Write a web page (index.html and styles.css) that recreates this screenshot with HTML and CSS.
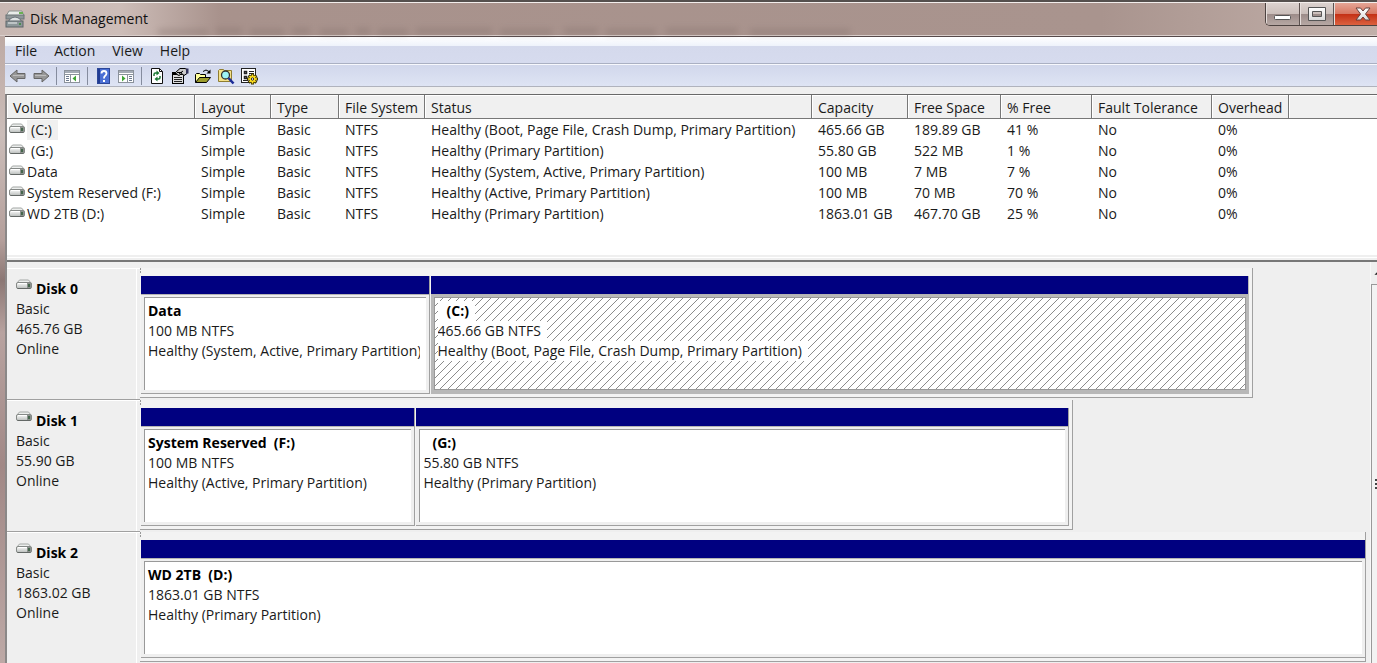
FILE: index.html
```html
<!DOCTYPE html>
<html lang="en">
<head>
<meta charset="utf-8">
<title>Disk Management</title>
<link rel="stylesheet" href="styles.css">
</head>
<body>
<svg class="defs" aria-hidden="true">
  <defs>
    <linearGradient id="metal" x1="0" y1="0" x2="0" y2="1"><stop offset="0" stop-color="#fdfdfd"/><stop offset="1" stop-color="#b9bdbb"/></linearGradient>
    <linearGradient id="glyph" x1="0" y1="0" x2="0" y2="1"><stop offset="0" stop-color="#ffffff"/><stop offset="1" stop-color="#d9d9d9"/></linearGradient>
    <symbol id="drive" viewBox="0 0 16 11">
      <path d="M3.500 1h9l3 3.500h-15z" fill="#eceeed" stroke="#a3a7a5" stroke-width="1"/>
      <rect x=".5" y="3.500" width="15" height="6" rx="1.500" fill="url(#metal)" stroke="#858987"/>
      <path d="M1.500 9.500h13" stroke="#636866"/>
      <path d="M2 4.500h10" stroke="#fff"/>
      <rect x="11" y="4" width="4" height="5" fill="#8c918e"/>
      <rect x="12" y="5" width="2" height="3" fill="#45664c"/>
    </symbol>
  </defs>
</svg>
<div class="window">
  <header class="titlebar">
    <svg class="ghost" viewBox="0 0 720 14" aria-hidden="true">
      <path d="M8 11h50M66 10h26M100 11h34M142 10h18M170 11h28M206 10h14M228 11h30M266 10h76M350 11h52M414 10h34M456 11h50M516 10h72M600 11h100"/>
    </svg>
    <svg class="app-icon" viewBox="0 0 20 18" aria-hidden="true">
      <path d="M4 1h13l2 5H1z" fill="#e9ecea" stroke="#8a918e"/>
      <rect x="14" y="2" width="4" height="2" fill="#69b052"/>
      <rect x="1" y="5" width="18" height="4" fill="#8f9799" stroke="#6c7577"/>
      <path d="M4 10q6-6 12 0v2H4z" fill="#dfe3e4" stroke="#69737a"/>
      <rect x="1" y="11" width="17" height="6" fill="#8d979a" stroke="#5c6568"/>
      <path d="M3 13h9" stroke="#eef1f2"/>
      <rect x="14" y="13" width="2" height="2" fill="#4c8c50"/>
    </svg>
    <h1 class="title">Disk Management</h1>
    <div class="controls">
      <button class="control minimize" type="button" aria-label="Minimize"><svg width="18" height="6" viewBox="0 0 18 6"><rect x=".5" y=".5" width="16" height="4" rx="1" fill="#fff" stroke="#555"/></svg></button>
      <button class="control maximize" type="button" aria-label="Maximize"><svg width="18" height="14" viewBox="0 0 18 14"><path d="M.5.5h17v13H.5zM4.500 4.500v5h9v-5z" fill="url(#glyph)" fill-rule="evenodd" stroke="#555"/></svg></button>
      <button class="control close" type="button" aria-label="Close"><svg width="16" height="14" viewBox="0 0 16 14"><path d="M1 1h4.500L8 4l2.500-3H15l-4.500 6 4.500 6h-4.500L8 10l-2.500 3H1l4.500-6z" fill="url(#glyph)" stroke="#66403c"/></svg></button>
    </div>
  </header>
  <div class="client">
    <nav class="menubar" aria-label="Menu">
      <button type="button">File</button>
      <button type="button">Action</button>
      <button type="button">View</button>
      <button type="button">Help</button>
    </nav>
    <div class="toolbar" role="toolbar" aria-label="Tools">
      <button type="button" aria-label="Back"><svg viewBox="0 0 18 18"><path d="M1 9l7-6v3.500h8v5H8V15z" fill="#979797" stroke="#666"/><path d="M4 8.500h11" stroke="#bdbdbd"/></svg></button>
      <button type="button" aria-label="Forward"><svg viewBox="0 0 18 18"><path d="M17 9l-7-6v3.500H2v5h8V15z" fill="#979797" stroke="#666"/><path d="M3 8.500h11" stroke="#bdbdbd"/></svg></button>
      <span class="divider"></span>
      <button type="button" aria-label="Show console tree"><svg viewBox="0 0 18 18"><rect x="1.500" y="3.500" width="15" height="12" fill="#fff" stroke="#8b929b"/><path d="M2 5h14" stroke="#a4abb5" stroke-width="2"/><path d="M2 7.500h14M7.500 8v8" stroke="#8b929b"/><path d="M3 9.500h3M3 11.500h3M3 13.500h3" stroke="#6e7c90"/><path d="M13 8.500v6L9.500 11.500z" fill="#3fa535"/></svg></button>
      <span class="divider"></span>
      <button type="button" aria-label="Help topics"><svg viewBox="0 0 18 18"><rect x="3.500" y="1.500" width="12" height="15" fill="#4a6fd4" stroke="#2c4798"/><path d="M5 2v14" stroke="#213c94" stroke-width="2"/><path d="M7.500 6.500q0-2.500 2.500-2.500T12.500 6.500q0 1.200-1.300 2.200T10 11.500" fill="none" stroke="#fff" stroke-width="1.800"/><rect x="9" y="13" width="2" height="2" fill="#fff"/></svg></button>
      <button type="button" aria-label="Show action pane"><svg viewBox="0 0 18 18"><rect x="1.500" y="3.500" width="15" height="12" fill="#fff" stroke="#8b929b"/><path d="M2 5h14" stroke="#a4abb5" stroke-width="2"/><path d="M2 7.500h14M10.500 8v8" stroke="#8b929b"/><path d="M12 9.500h3M12 11.500h3M12 13.500h3" stroke="#6e7c90"/><path d="M5 8.500v6l3.500-3z" fill="#3fa535"/></svg></button>
      <span class="divider"></span>
      <button type="button" aria-label="Refresh"><svg viewBox="0 0 18 18"><path d="M3.500 1.500h8l3 3v12h-11z" fill="#fff" stroke="#111"/><path d="M11.500 1.500v3h3" fill="none" stroke="#111"/><path d="M6 9V7.500q0-1.500 1.500-1.500H9M12 9v1.500q0 1.500-1.500 1.500H9" fill="none" stroke="#1c7a35" stroke-width="1.500"/><path d="M8.500 3.500v5L11.500 6zM9.500 9.500v5L6.500 12z" fill="#1c7a35"/></svg></button>
      <button type="button" aria-label="Properties"><svg viewBox="0 0 18 18"><rect x="1.500" y="5.500" width="11" height="11" fill="#ddd" stroke="#000"/><path d="M2 7h10" stroke="#000" stroke-width="2"/><path d="M3 10.500h8M3 12.500h8M3 14.500h8" stroke="#222"/><path d="M4.500 5.500L9 1.500h5l2 1v4l-3 2-2-2-3 2-2-1z" fill="#ccc" stroke="#000"/><path d="M6 5.500h5M8 7l4-3" stroke="#000"/><path d="M15 1.500h2.500v5H15z" fill="#33335c"/></svg></button>
      <button type="button" aria-label="Open"><svg viewBox="0 0 18 18"><path d="M1.500 15.500v-8l1-1h3l1 1h5v3" fill="#ffff9c" stroke="#000"/><path d="M1.500 15.500l4-5h11l-4 5z" fill="#9c9c2a" stroke="#000"/><path d="M9 4.500q3-3 6 0" fill="none" stroke="#000"/><path d="M16.500 2.500v4h-4z" fill="#000"/></svg></button>
      <button type="button" aria-label="Find"><svg viewBox="0 0 18 18"><path d="M1.500 14.500v-11l1-1h4l1 1h7v11z" fill="#f5e28a" stroke="#8f7d30"/><circle cx="8.500" cy="8" r="4" fill="#9df3f7" stroke="#333" stroke-width="1.300"/><path d="M11.500 11l5 5.500" stroke="#1b2b98" stroke-width="2.500"/></svg></button>
      <button type="button" aria-label="Settings"><svg viewBox="0 0 18 18"><rect x="1.500" y="1.500" width="14" height="14" fill="#fff" stroke="#222"/><path d="M4.500 4.500h2v2h-2zM4.500 9.500h2v2h-2z" fill="#fff" stroke="#222" stroke-width="1.500"/><path d="M9 4.500h5M9 6.500h5M3 13.500h5" stroke="#222"/><path d="M12.500 6.500v11M7 12h11M8.700 8.200l7.600 7.600M16.300 8.200l-7.600 7.600" stroke="#3a3200" stroke-width="3"/><path d="M12.500 7.500v9M8 12h9M9.500 9l6 6M15.500 9l-6 6" stroke="#ffdf20" stroke-width="1.600"/><circle cx="12.500" cy="12" r="3" fill="#ffdf20"/><circle cx="12.500" cy="12" r="1.200" fill="#fff" stroke="#222"/></svg></button>
    </div>
    <main class="content">
      <section class="volumes" aria-label="Volumes">
        <table class="volume-table">
          <colgroup><col class="c-volume"><col class="c-layout"><col class="c-type"><col class="c-fs"><col class="c-status"><col class="c-capacity"><col class="c-space"><col class="c-free"><col class="c-fault"><col class="c-overhead"><col></colgroup>
          <thead>
            <tr><th>Volume</th><th>Layout</th><th>Type</th><th>File System</th><th>Status</th><th>Capacity</th><th>Free Space</th><th>% Free</th><th>Fault Tolerance</th><th>Overhead</th><th></th></tr>
          </thead>
          <tbody>
            <tr><td><span class="volume"><svg class="drive"><use href="#drive"/></svg><span class="letter selected">(C:)</span></span></td><td>Simple</td><td>Basic</td><td>NTFS</td><td>Healthy (Boot, Page File, Crash Dump, Primary Partition)</td><td>465.66 GB</td><td>189.89 GB</td><td>41 %</td><td>No</td><td>0%</td><td></td></tr>
            <tr><td><span class="volume"><svg class="drive"><use href="#drive"/></svg><span class="letter">(G:)</span></span></td><td>Simple</td><td>Basic</td><td>NTFS</td><td>Healthy (Primary Partition)</td><td>55.80 GB</td><td>522 MB</td><td>1 %</td><td>No</td><td>0%</td><td></td></tr>
            <tr><td><span class="volume"><svg class="drive"><use href="#drive"/></svg><span>Data</span></span></td><td>Simple</td><td>Basic</td><td>NTFS</td><td>Healthy (System, Active, Primary Partition)</td><td>100 MB</td><td>7 MB</td><td>7 %</td><td>No</td><td>0%</td><td></td></tr>
            <tr><td><span class="volume"><svg class="drive"><use href="#drive"/></svg><span>System Reserved (F:)</span></span></td><td>Simple</td><td>Basic</td><td>NTFS</td><td>Healthy (Active, Primary Partition)</td><td>100 MB</td><td>70 MB</td><td>70 %</td><td>No</td><td>0%</td><td></td></tr>
            <tr><td><span class="volume"><svg class="drive"><use href="#drive"/></svg><span>WD 2TB (D:)</span></span></td><td>Simple</td><td>Basic</td><td>NTFS</td><td>Healthy (Primary Partition)</td><td>1863.01 GB</td><td>467.70 GB</td><td>25 %</td><td>No</td><td>0%</td><td></td></tr>
          </tbody>
        </table>
      </section>
      <div class="splitter"></div>
      <section class="disks" aria-label="Disks">
        <div class="disk-list">
          <article class="disk">
            <div class="disk-info">
              <h2><svg class="drive"><use href="#drive"/></svg>Disk 0</h2>
              <p>Basic</p><p>465.76 GB</p><p>Online</p>
            </div>
            <div class="lane"><div class="graph" style="width:90.8%">
              <div class="partition" style="flex-grow:288"><div class="band"></div><div class="frame"><div class="face"><h3>Data</h3><p>100 MB NTFS</p><p>Healthy (System, Active, Primary Partition)</p></div></div></div>
              <div class="partition active" style="flex-grow:819"><div class="band"></div><div class="frame"><div class="face"><h3 class="indent">(C:)</h3><p>465.66 GB NTFS</p><p>Healthy (Boot, Page File, Crash Dump, Primary Partition)</p></div></div></div>
            </div></div>
          </article>
          <article class="disk">
            <div class="disk-info">
              <h2><svg class="drive"><use href="#drive"/></svg>Disk 1</h2>
              <p>Basic</p><p>55.90 GB</p><p>Online</p>
            </div>
            <div class="lane"><div class="graph" style="width:76.1%">
              <div class="partition" style="flex-grow:274"><div class="band"></div><div class="frame"><div class="face"><h3>System Reserved&nbsp; (F:)</h3><p>100 MB NTFS</p><p>Healthy (Active, Primary Partition)</p></div></div></div>
              <div class="partition" style="flex-grow:653"><div class="band"></div><div class="frame"><div class="face"><h3 class="indent">(G:)</h3><p>55.80 GB NTFS</p><p>Healthy (Primary Partition)</p></div></div></div>
            </div></div>
          </article>
          <article class="disk">
            <div class="disk-info">
              <h2><svg class="drive"><use href="#drive"/></svg>Disk 2</h2>
              <p>Basic</p><p>1863.02 GB</p><p>Online</p>
            </div>
            <div class="lane"><div class="graph full">
              <div class="partition" style="flex-grow:1"><div class="band"></div><div class="frame"><div class="face"><h3>WD 2TB&nbsp; (D:)</h3><p>1863.01 GB NTFS</p><p>Healthy (Primary Partition)</p></div></div></div>
            </div></div>
          </article>
        </div>
        <div class="scrollbar" aria-hidden="true">
          <svg class="arrow" viewBox="0 0 7 20"><path d="M4 12l3-3v3z" fill="#222"/></svg>
          <div class="thumb"><span class="grip"></span></div>
        </div>
      </section>
    </main>
  </div>
</div>
</body>
</html>
```
FILE: styles.css
```css
* { box-sizing: border-box; }

body {
  margin: 0;
  overflow: hidden;
  background: #a9958f;
  color: #1a1a1a;
  font: 14px/20px "Open Sans", "Noto Sans", sans-serif;
}

h1, h2, h3, p { margin: 0; font-size: inherit; }
button { margin: 0; border: 0; background: none; font: inherit; color: inherit; }
svg { display: block; flex: none; }
.defs { position: absolute; width: 0; height: 0; }

.window {
  display: flex;
  flex-direction: column;
  min-height: 100vh;
  border-top: 2px solid #55504e;
  background: linear-gradient(#b8a39d, #cbbdb9 20%, #b49f9b 36%, #8b7774 42%, #b8a3a0 50%, #a18886 70%, #bda9a6);
}

.titlebar {
  position: relative;
  display: flex;
  align-items: center;
  gap: 5px;
  height: 34px;
  padding-left: 5px;
  border-top: 1px solid #f3eeec;
  border-bottom: 1px solid #d9cecb;
  background: linear-gradient(90deg, #c9b8b3 0, #cdbdb8 120px, #a8928c 220px, #a9948e 80%, #c2b0aa 100%);
}

.ghost {
  position: absolute;
  left: 150px;
  bottom: 0;
  width: 720px;
  height: 14px;
  stroke: #7d6b66;
  stroke-width: 5;
  opacity: 0.4;
  filter: blur(3px);
}

.app-icon { width: 20px; height: 18px; }
.title { flex: 1; font-weight: 400; color: #111; }

.controls {
  display: flex;
  align-self: flex-start;
  height: 23px;
  border: 1px solid #4d4341;
  border-width: 0 0 1px 1px;
  border-radius: 0 0 0 5px;
  overflow: hidden;
}

.control {
  display: flex;
  align-items: center;
  justify-content: center;
  width: 34px;
  padding: 0;
  border-right: 1px solid #5d5250;
  background: linear-gradient(#dcd2cf, #cbbfbb 48%, #9b8b88 50%, #b7a8a4);
  box-shadow: inset 1px 0 #e6dedb;
}

.control.minimize { padding-top: 8px; }

.control.close {
  width: 43px;
  padding-left: 14px;
  border-right: 0;
  background: linear-gradient(#e5a596, #d77863 48%, #c32f14 50%, #dc6240);
}

.client {
  display: flex;
  flex: 1;
  flex-direction: column;
  margin-left: 5px;
  border-top: 1px solid #55494a;
  background: #efefef;
}

.menubar {
  display: flex;
  gap: 1px;
  height: 27px;
  padding: 3px 0 2px 2px;
  border-bottom: 1px solid #aab0c2;
  background: linear-gradient(#fff, #eef2fb 35%, #d4d9ec 36%, #d6dbee);
}

.menubar button { padding: 0 8px; }

.toolbar {
  display: flex;
  align-items: center;
  gap: 5px;
  height: 23px;
  padding-left: 4px;
  border-top: 1px solid #f7f8fd;
  border-bottom: 1px solid #b0b3bd;
  background: linear-gradient(#d1d7eb, #dee4f4);
}

.toolbar button { width: 18px; height: 18px; padding: 0; }
.toolbar svg { width: 18px; height: 18px; }
.divider { width: 1px; height: 18px; margin: 0 1px; background: #858c9e; }

.content {
  display: flex;
  flex: 1;
  flex-direction: column;
  margin-top: 7px;
  border-top: 1px solid #696969;
  border-left: 2px solid #8b8888;
}

.volumes { min-height: 160px; background: #fff; }

.volume-table {
  width: 100%;
  border-collapse: separate;
  border-spacing: 0;
  table-layout: fixed;
}

.volume-table th {
  height: 24px;
  padding: 2px 6px 0;
  border-right: 1px solid #777;
  border-bottom: 1px solid #777;
  background: #f0f0f0;
  box-shadow: inset 1px 1px #fff;
  font-weight: 400;
  text-align: left;
  white-space: nowrap;
}

.volume-table th:last-child { border-right: 0; }
.volume-table td { height: 21px; padding: 0 6px; white-space: nowrap; }
.volume-table td:first-child { padding: 0 2px; }

.c-volume { width: 188px; }
.c-layout { width: 76px; }
.c-type { width: 68px; }
.c-fs { width: 86px; }
.c-status { width: 387px; }
.c-capacity { width: 96px; }
.c-space { width: 93px; }
.c-free { width: 91px; }
.c-fault { width: 120px; }
.c-overhead { width: 77px; }

.volume { display: flex; gap: 2px; }
.drive { width: 16px; height: 11px; margin-top: 3px; }
.letter { padding: 0 6px 0 4px; }
.selected { background: #f0f0f0; }

.splitter {
  height: 7px;
  border-top: 2px solid #efefef;
  border-bottom: 2px solid #777;
  box-shadow: inset 0 1px #fff;
}

.disks { display: flex; flex: 1; }
.disk-list { flex: 1; min-width: 0; padding-top: 6px; }

.disk {
  display: grid;
  grid-template-columns: 133px 1fr;
  height: 132px;
}

.disk-info {
  padding: 10px 0 0 9px;
  border-top: 1px solid #fff;
  border-bottom: 1px solid #a0a0a0;
  background: linear-gradient(#fff, #fff) 129px 0 / 1px 100% no-repeat;
}

.disk-info h2 { display: flex; gap: 4px; font-weight: 700; color: #000; }
.disk-info .drive { margin-top: 0; }

.lane { padding-right: 4px; }

.graph {
  display: flex;
  gap: 1px;
  height: 130px;
  padding: 8px 3px 3px 1px;
  border-right: 1px solid #a0a0a0;
  border-bottom: 1px solid #a0a0a0;
  background: repeating-linear-gradient(#999 0 2px, transparent 2px 3px) 0 0 / 1px 6px no-repeat #f3f3f3;
}

.graph.full { padding-right: 0; }

.partition {
  display: flex;
  flex: 1 1 0;
  flex-direction: column;
  min-width: 0;
  border-right: 1px solid #a0a0a0;
  border-bottom: 1px solid #a0a0a0;
}

.full .partition { border-right: 0; }

.band { height: 18px; background: #000080; }

.frame {
  display: flex;
  flex: 1;
  padding: 2px 3px 3px 3px;
  border-top: 1px solid #b4b4b4;
  background: #efefef;
}

.face {
  flex: 1;
  min-width: 0;
  padding: 3px 6px 3px 3px;
  border-top: 1px solid #999;
  border-left: 1px solid #999;
  background: #fff;
  white-space: nowrap;
}

.face h3 { font-weight: 700; color: #000; }
.face p { overflow: hidden; }
.face .indent { padding-left: 9px; }

.active { border-color: #b8b8b8; }
.active .frame { padding: 2px 2px 3px 3px; background: #b8b8b8; }

.active .face {
  border: 1px solid #999;
  background: #fff linear-gradient(to bottom right, transparent 46%, #8c8c8c 48%, #8c8c8c 52%, transparent 54%) 0 0 / 8px 8px;
}

.active h3, .active p { width: fit-content; padding-right: 6px; background: #fff; }

.scrollbar { display: flex; flex-direction: column; width: 7px; border-left: 1px solid #f8f8f8; }
.arrow { width: 6px; height: 22px; }

.thumb {
  display: flex;
  flex: 1;
  align-items: center;
  justify-content: flex-end;
  padding-top: 18px;
  border-top: 1px solid #999;
  border-left: 1px solid #999;
  background: #f3f3f3;
}

.grip {
  width: 2px;
  height: 10px;
  background: repeating-linear-gradient(#444 0 2px, #f3f3f3 2px 4px);
}
```
